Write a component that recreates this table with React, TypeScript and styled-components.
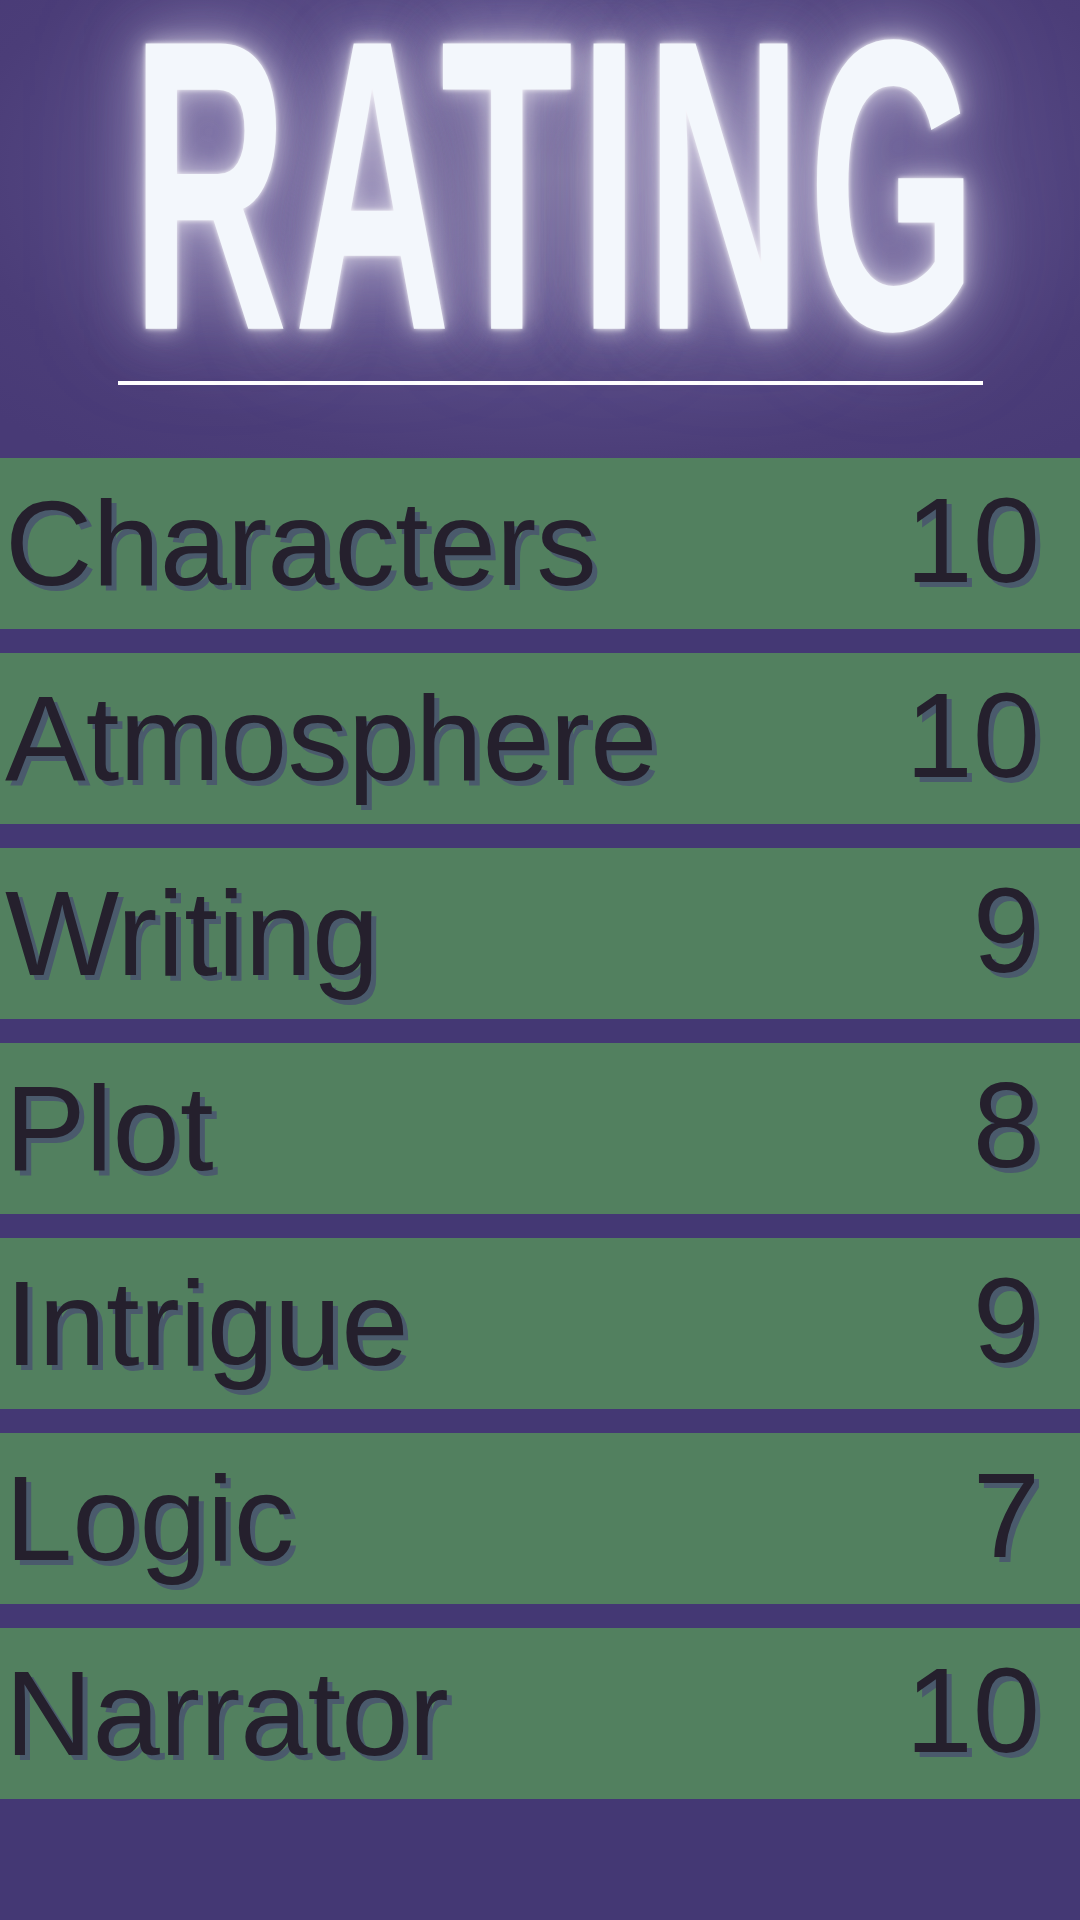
import styled, { createGlobalStyle } from 'styled-components'

const GlobalStyle = createGlobalStyle`
  html, body {
    margin: 0;
    padding: 0;
    background: #443874;
  }
  #root {
    width: 1080px;
    min-height: 1920px;
  }
`

const ratings = [
  { label: 'Characters', score: 10 },
  { label: 'Atmosphere', score: 10 },
  { label: 'Writing', score: 9 },
  { label: 'Plot', score: 8 },
  { label: 'Intrigue', score: 9 },
  { label: 'Logic', score: 7 },
  { label: 'Narrator', score: 10 },
]

const App = () => {
  return (
    <Page>
      <GlobalStyle />
      <Header>
        <TitleWrap>
          <Title>RATING</Title>
        </TitleWrap>
        <Divider />
      </Header>
      <List>
        {ratings.map((r) => (
          <Row key={r.label}>
            <Label>{r.label}</Label>
            <Score>{r.score}</Score>
          </Row>
        ))}
      </List>
    </Page>
  )
}

export default App

const Page = styled.div`
  width: 1080px;
  min-height: 1920px;
  background: #443874;
  font-family: 'Liberation Sans', Arial, sans-serif;
`

const Header = styled.header`
  height: 458px;
  overflow: hidden;
  background: radial-gradient(
    ellipse 70% 80% at 52% 38%,
    #6e6394 0%,
    #594c87 45%,
    #4b3d78 80%,
    #483a76 100%
  );
`

const TitleWrap = styled.div`
  display: flex;
  justify-content: center;
  height: 372px;
`

// condensed display face faked with a tall vertical stretch
const Title = styled.h1`
  margin: 0;
  flex: none;
  font-family: 'Liberation Sans', Arial, sans-serif;
  font-weight: 700;
  font-size: 217px;
  line-height: 195px;
  height: 195px;
  letter-spacing: 6px;
  color: #f3f7fc;
  white-space: nowrap;
  transform-origin: 50% 0;
  transform: translateX(17px) scaleY(1.911);
  text-shadow:
    0 0 4px rgba(255, 255, 255, 0.9),
    0 0 16px rgba(255, 255, 255, 0.55),
    0 0 40px rgba(235, 230, 250, 0.5),
    0 0 80px rgba(220, 215, 245, 0.35);
`

const Divider = styled.div`
  height: 4px;
  margin: 9px 97px 0 118px;
  background: #ffffff;
`

const List = styled.div`
  display: flex;
  flex-direction: column;
  gap: 24px;
`

const Row = styled.div`
  display: flex;
  align-items: center;
  justify-content: space-between;
  height: 171px;
  padding: 0 40px 0 5px;
  background: #52805f;
  color: #25202d;
  font-size: 121px;
  line-height: 1;
  text-shadow: 5px 5px 0 #4a5a6c;
`

const Label = styled.span`
  white-space: nowrap;
`

const Score = styled.span`
  margin-bottom: 6px;
`
